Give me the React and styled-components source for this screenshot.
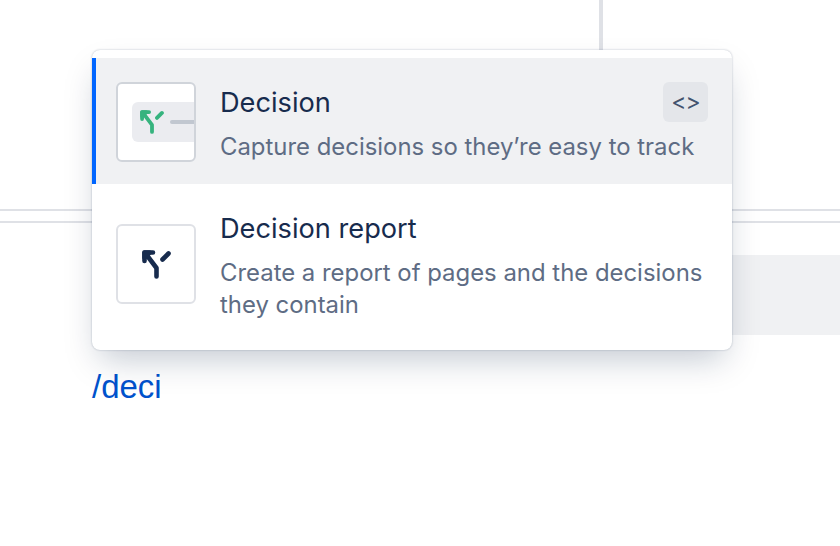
import React from 'react'
import styled, { createGlobalStyle } from 'styled-components'

const GlobalStyle = createGlobalStyle`
  html, body {
    margin: 0;
    background: #fff;
  }
`

const DecisionIcon = ({ size, color }) => (
  <svg width={size} height={size} viewBox="0 0 29 29" fill="none" stroke={color} strokeWidth="4.6" strokeLinecap="round" strokeLinejoin="round">
    <path d="M14.5 26.5V18L4 4" />
    <path d="M2.5 11V2.5H11" />
    <path d="M2.5 7.5V2.5H7.5Z" fill={color} />
    <path d="M20.5 9.5L26.5 3.5" />
  </svg>
)

const App = () => (
  <Page>
    <GlobalStyle />
    <VerticalRule />
    <HeaderRule />
    <HeaderRule $second />
    <GreyCell />
    <SlashText>/deci</SlashText>
    <Menu>
      <MenuRow $active>
        <Thumb $active>
          <Tile>
            <DecisionIcon size={24} color="#36b37e" />
            <TileLine />
          </Tile>
        </Thumb>
        <RowText>
          <TitleLine>
            <Title>Decision</Title>
            <Shortcut>&lt;&gt;</Shortcut>
          </TitleLine>
          <Description>Capture decisions so they’re easy to track</Description>
        </RowText>
      </MenuRow>
      <MenuRow>
        <Thumb>
          <DecisionIcon size={29} color="#172b4d" />
        </Thumb>
        <RowText>
          <TitleLine>
            <Title>Decision report</Title>
          </TitleLine>
          <Description>Create a report of pages and the decisions they contain</Description>
        </RowText>
      </MenuRow>
    </Menu>
  </Page>
)

export default App

const Page = styled.div`
  position: relative;
  width: 840px;
  height: 546px;
  overflow: hidden;
  background: #fff;
`

const VerticalRule = styled.div`
  width: 4px;
  height: 50px;
  margin-left: 599px;
  background: #dfe1e6;
`

const HeaderRule = styled.div`
  height: 2px;
  margin-top: ${props => (props.$second ? '10px' : '159px')};
  background: #dfe1e6;
`

const GreyCell = styled.div`
  height: 80px;
  margin: 32px 0 0 600px;
  background: #f0f1f3;
`

const SlashText = styled.div`
  margin: 32px 0 0 92px;
  font-family: "Liberation Sans", Arial, sans-serif;
  font-size: 33px;
  line-height: 40px;
  color: #0052cc;
`

const Menu = styled.div`
  position: absolute;
  top: 50px;
  left: 92px;
  width: 640px;
  height: 300px;
  box-sizing: border-box;
  padding-top: 8px;
  background: #fff;
  border-radius: 8px;
  box-shadow: 0 16px 32px -8px rgba(9, 30, 66, 0.25), 0 0 2px rgba(9, 30, 66, 0.31);
  font-family: Inter, "Noto Sans", sans-serif;
`

const MenuRow = styled.div`
  display: flex;
  align-items: center;
  gap: 24px;
  padding: 24px 24px 22px 20px;
  border-left: 4px solid ${props => (props.$active ? '#0065ff' : 'transparent')};
  background: ${props => (props.$active ? '#f0f1f3' : 'transparent')};
`

const Thumb = styled.div`
  flex: none;
  display: flex;
  align-items: center;
  justify-content: ${props => (props.$active ? 'flex-end' : 'center')};
  box-sizing: border-box;
  width: 80px;
  height: 80px;
  background: #fff;
  border: 2px solid ${props => (props.$active ? '#d0d4da' : '#dfe1e6')};
  border-radius: 6px;
  overflow: hidden;
`

const Tile = styled.div`
  display: flex;
  align-items: center;
  gap: 6px;
  box-sizing: border-box;
  width: 62px;
  height: 40px;
  padding-left: 8px;
  background: #ebecf0;
  border-radius: 6px 0 0 6px;
`

const TileLine = styled.div`
  flex: 1;
  height: 4px;
  border-radius: 2px 0 0 2px;
  background: #c1c7d0;
`

const RowText = styled.div`
  flex: 1;
  min-width: 0;
`

const TitleLine = styled.div`
  display: flex;
  align-items: center;
  justify-content: space-between;
  height: 40px;
  margin-bottom: 9px;
`

const Title = styled.div`
  padding-top: 2px;
  font-size: 27.2px;
  line-height: 40px;
  color: #172b4d;
`

const Shortcut = styled.div`
  display: flex;
  align-items: center;
  justify-content: center;
  width: 45px;
  height: 40px;
  border-radius: 6px;
  background: #e4e6ea;
  font-size: 23px;
  letter-spacing: -1px;
  color: #42526e;
`

const Description = styled.div`
  margin-bottom: -1px;
  font-size: 23.9px;
  line-height: 32px;
  color: #5e6c84;
`
